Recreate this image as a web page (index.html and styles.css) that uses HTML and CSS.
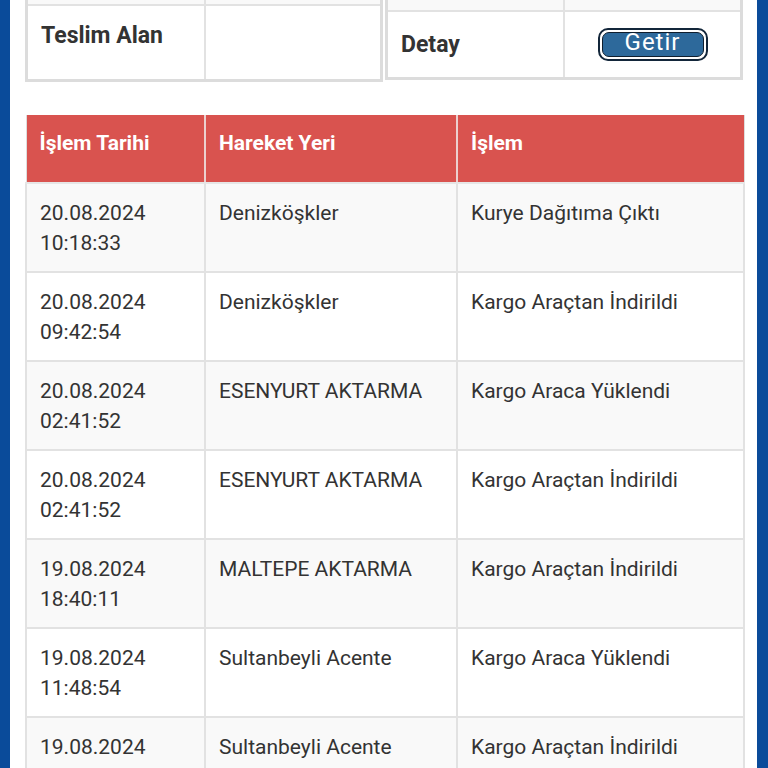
FILE: index.html
```html
<!DOCTYPE html>
<html lang="tr">
<head>
<meta charset="utf-8">
<title>Kargo Takip</title>
<link rel="stylesheet" href="styles.css">
</head>
<body>
<div class="page">
  <div class="content">
    <div class="info-row">
      <table class="info info-left">
        <tr class="stripe"><td class="k"></td><td class="v"></td></tr>
        <tr class="r2"><td class="k">Teslim Alan</td><td class="v"></td></tr>
      </table>
      <table class="info info-right">
        <tr class="stripe"><td class="k"></td><td class="v"></td></tr>
        <tr class="r2"><td class="k">Detay</td><td class="v btn-cell"><button class="getir"><span class="getir-in">Getir</span></button></td></tr>
      </table>
    </div>

    <table class="moves">
      <colgroup><col class="c1"><col class="c2"><col class="c3"></colgroup>
      <thead>
        <tr><th>İşlem Tarihi</th><th>Hareket Yeri</th><th>İşlem</th></tr>
      </thead>
      <tbody>
        <tr><td>20.08.2024<br>10:18:33</td><td>Denizköşkler</td><td>Kurye Dağıtıma Çıktı</td></tr>
        <tr><td>20.08.2024<br>09:42:54</td><td>Denizköşkler</td><td>Kargo Araçtan İndirildi</td></tr>
        <tr><td>20.08.2024<br>02:41:52</td><td>ESENYURT AKTARMA</td><td>Kargo Araca Yüklendi</td></tr>
        <tr><td>20.08.2024<br>02:41:52</td><td>ESENYURT AKTARMA</td><td>Kargo Araçtan İndirildi</td></tr>
        <tr><td>19.08.2024<br>18:40:11</td><td>MALTEPE AKTARMA</td><td>Kargo Araçtan İndirildi</td></tr>
        <tr><td>19.08.2024<br>11:48:54</td><td>Sultanbeyli Acente</td><td>Kargo Araca Yüklendi</td></tr>
        <tr><td>19.08.2024<br>10:02:17</td><td>Sultanbeyli Acente</td><td>Kargo Araçtan İndirildi</td></tr>
      </tbody>
    </table>
  </div>
</div>
</body>
</html>
```

FILE: styles.css
```css
html, body {
  margin: 0;
  padding: 0;
  background: #ffffff;
  font-family: Roboto, "Noto Sans", "Liberation Sans", sans-serif;
  color: #333333;
}

.page {
  height: 768px;
  overflow: hidden;
  border-left: 10px solid #0a4b9a;
  border-right: 11px solid #0a4b9a;
  background: #ffffff;
}

.content {
  padding: 0 14px 0 15px;
}

.info-row {
  display: flex;
  align-items: flex-start;
  gap: 2px;
  margin-top: -40px;
}

.info {
  width: 358px;
  border-collapse: collapse;
  border: 3px solid #dcdcdc;
  table-layout: fixed;
  font-size: 23px;
}

.info td {
  border: 2px solid #e2e2e2;
  padding: 0 13px;
  vertical-align: top;
}

.info .stripe td {
  background: #f9f9f9;
}

.info-left .stripe td { height: 41px; }
.info-left .r2 td { height: 58px; padding-top: 15px; }
.info-left .k {
  width: 150px;
  font-weight: 700;
  line-height: 30px;
}

.info-right .stripe td { height: 47px; }
.info-right .r2 td { height: 65px; vertical-align: middle; }
.info-right .k {
  width: 149px;
  font-weight: 700;
  line-height: 30px;
}

.info-right .r2 td.btn-cell {
  text-align: center;
  padding: 0;
}

.getir {
  display: inline-block;
  width: 110px;
  height: 33px;
  margin: 0 0 0 0;
  padding: 2px;
  border: 2px solid #13263a;
  border-radius: 10px;
  background: #ffffff;
  font-family: Roboto, "Liberation Sans", sans-serif;
  vertical-align: middle;
  box-sizing: border-box;
}

.getir-in {
  display: block;
  height: 25px;
  border-radius: 7px;
  background: #2d699b;
  border: 1px solid #0f1e2e;
  box-sizing: border-box;
  overflow: hidden;
  color: #ffffff;
  font-size: 24px;
  line-height: 19px;
  letter-spacing: 1px;
}

.moves {
  width: 718px;
  margin-top: 33px;
  border-collapse: collapse;
  table-layout: fixed;
  font-size: 21px;
}

.moves .c1 { width: 179px; }
.moves .c2 { width: 252px; }
.moves .c3 { width: 287px; }

.moves th {
  background: #d9534f;
  color: #ffffff;
  font-weight: 700;
  text-align: left;
  height: 68px;
  padding: 13px 13px 0;
  line-height: 30px;
  vertical-align: top;
  border-left: 2px solid #ecd0cf;
  border-right: 2px solid #ecd0cf;
  border-bottom: 2px solid #e6e6e6;
  box-sizing: border-box;
}

.moves th:first-child { border-left: 1px solid #dddddd; }
.moves th:last-child { border-right: 1px solid #dddddd; }

.moves td {
  height: 89px;
  padding: 14px 13px 0;
  line-height: 30px;
  vertical-align: top;
  border: 2px solid #e2e2e2;
  box-sizing: border-box;
  color: #333333;
}

.moves tbody tr:nth-child(odd) td {
  background: #f9f9f9;
}
```
